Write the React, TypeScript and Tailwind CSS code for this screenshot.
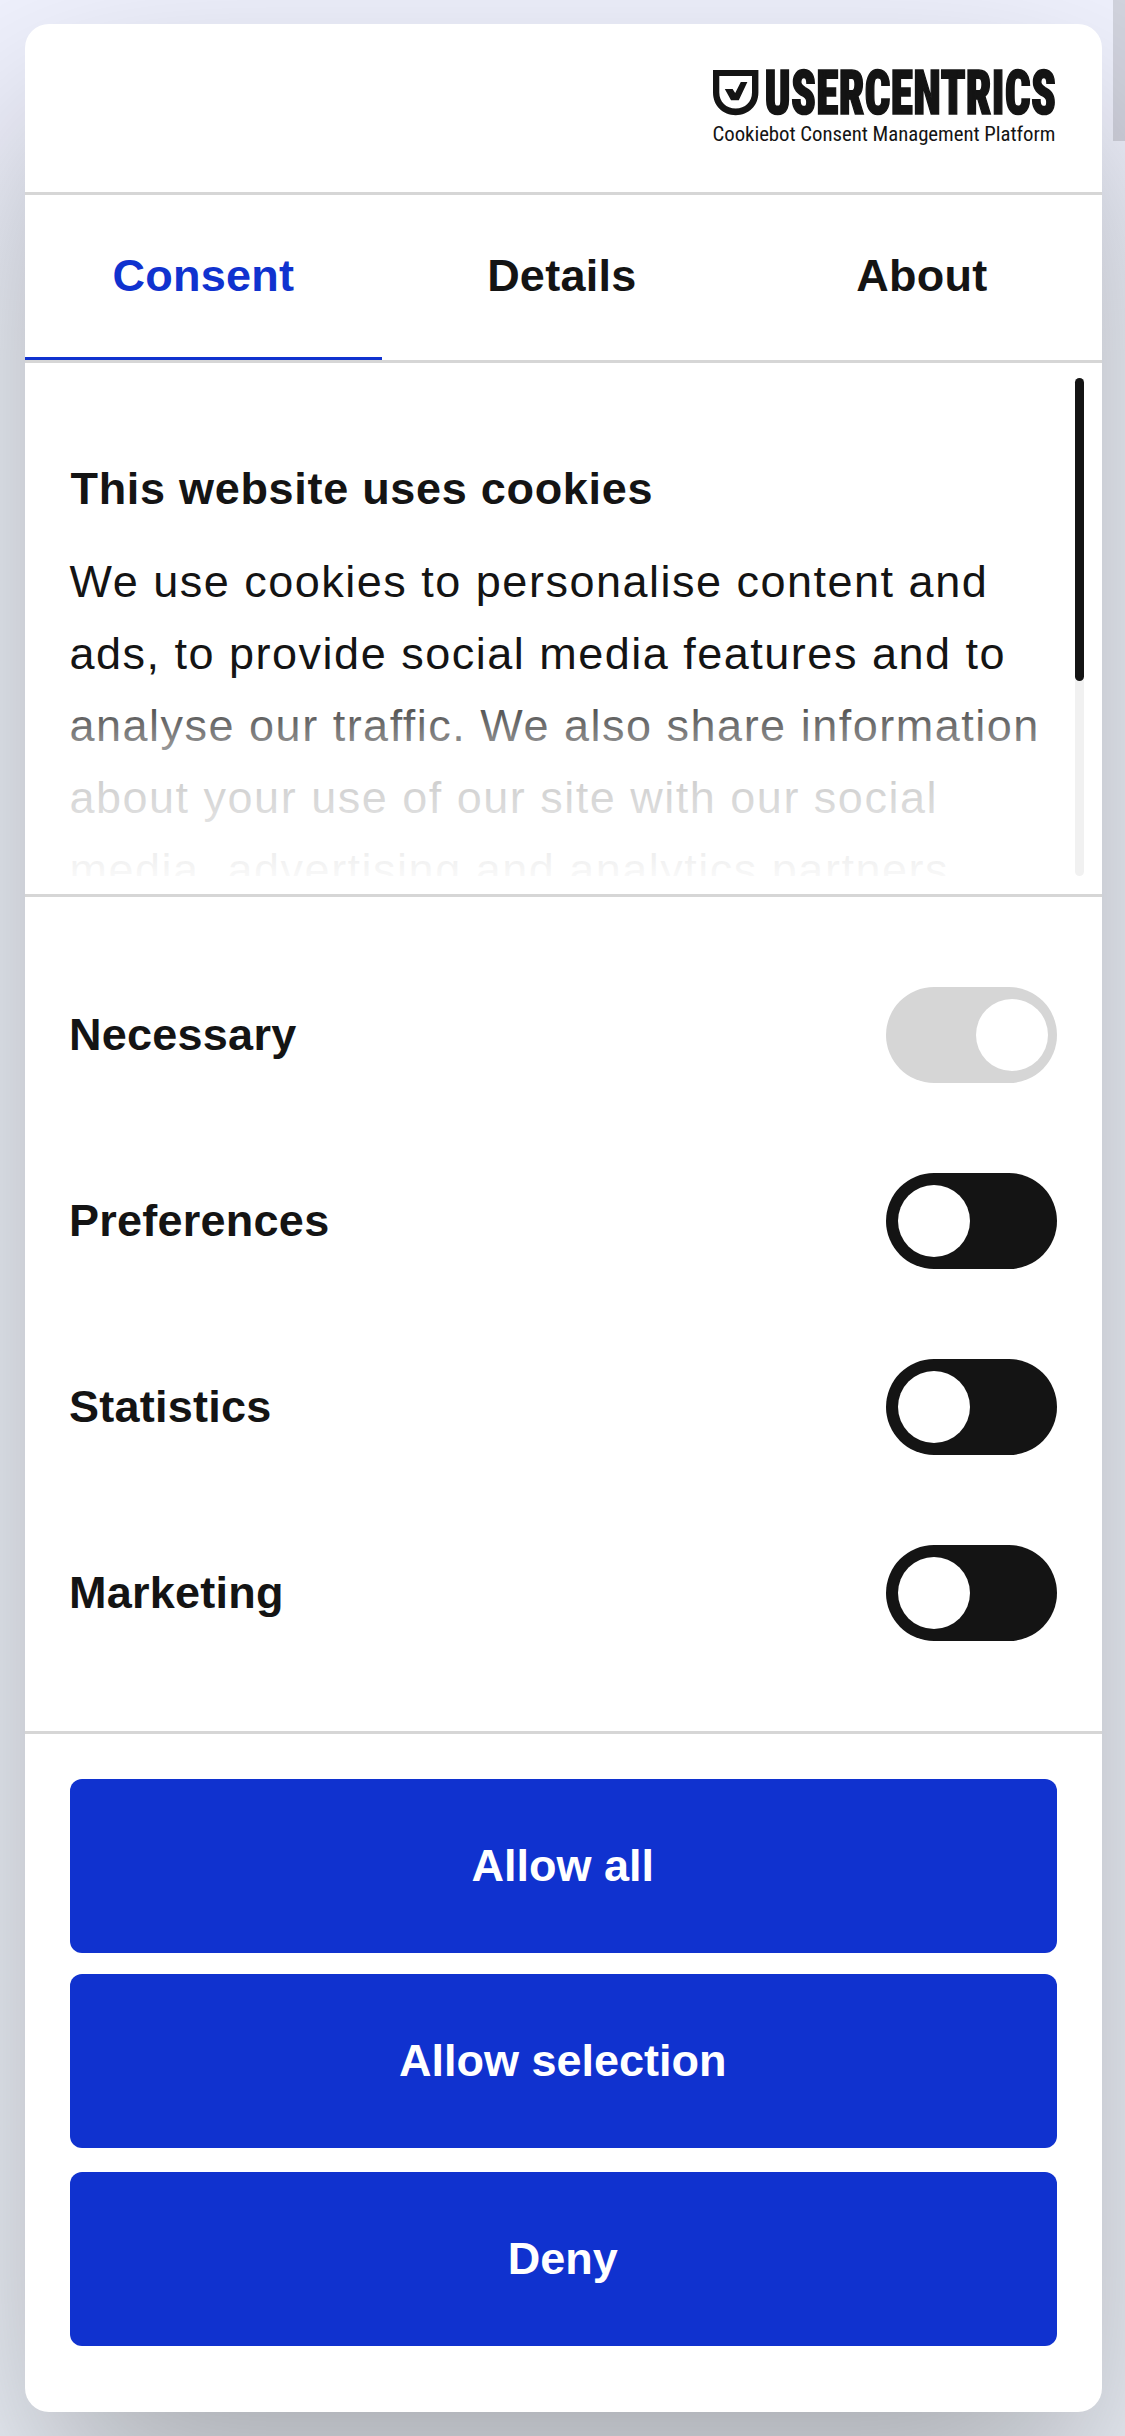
import { useState } from 'react';

interface Category {
  id: string;
  label: string;
  locked?: boolean;
}

const tabs = ['Consent', 'Details', 'About'];

const categories: Category[] = [
  { id: 'necessary', label: 'Necessary', locked: true },
  { id: 'preferences', label: 'Preferences' },
  { id: 'statistics', label: 'Statistics' },
  { id: 'marketing', label: 'Marketing' },
];

function Logo() {
  return (
    <svg
      width="343"
      height="80"
      viewBox="0 0 343 80"
      fill="#141414"
      fontFamily="'Roboto Condensed', Roboto, sans-serif"
      className="overflow-visible"
      role="img"
      aria-label="Usercentrics"
    >
      {/* Shield */}
      <path fillRule="evenodd" d="M0 0H45.4V22.5C45.4 35.8 35.5 45.2 22.7 45.2S0 35.8 0 22.5ZM6.3 6V22.5C6.3 32 13.3 38.5 22.7 38.5S39 32 39 22.5V6Z" />
      <path d="M11.8 19H19.6L22.2 22.9L27.8 12H34.4L25.8 30.3H18Z" />
      <text
        transform="translate(51.6 43.9) scale(0.75 1)"
        fontWeight="900"
        fontSize="60.5"
        textLength="388.5"
        stroke="#141414"
        strokeWidth="1.6"
      >
        USERCENTRICS
      </text>
      <text x="-0.5" y="71" fontSize="20.8" textLength="343">
        Cookiebot Consent Management Platform
      </text>
    </svg>
  );
}

interface ToggleProps {
  checked: boolean;
  locked?: boolean;
  onChange: () => void;
}

function Toggle({ checked, locked, onChange }: ToggleProps) {
  return (
    <button
      type="button"
      role="switch"
      aria-checked={checked}
      disabled={locked}
      onClick={onChange}
      className={`flex h-24 w-[171px] items-center rounded-full ${locked ? 'bg-[#d6d6d6]' : 'bg-[#141414]'} ${checked ? 'justify-end pr-[9px]' : 'justify-start pl-3'}`}
    >
      <span className="size-[72px] rounded-full bg-white" />
    </button>
  );
}

export default function App() {
  const [activeTab, setActiveTab] = useState('Consent');
  const [enabled, setEnabled] = useState<string[]>(['necessary']);

  const toggle = (id: string) =>
    setEnabled(prev => (prev.includes(id) ? prev.filter(item => item !== id) : [...prev, id]));

  return (
    <div className="relative h-[2436px] w-[1125px] overflow-hidden bg-linear-to-b from-[#f0f2fe] from-5% to-[#f1f5fd] to-15% pl-[25.3px] pt-6 font-['Liberation_Sans',Arial,sans-serif] text-[45px] text-[#141414]">
      {/* Page scrollbar */}
      <div className="absolute right-0 top-0 z-10 h-[141px] w-3 bg-black/12" />

      <div className="flex h-[2388px] w-[1077px] flex-col overflow-hidden rounded-3xl bg-white shadow-[0_96px_204px_rgba(0,0,0,0.3)]">
        <header className="flex h-[171px] shrink-0 justify-end border-b-3 border-[#d6d6d6] pr-[46.5px] pt-[46px]">
          <Logo />
        </header>

        <nav className="grid h-[168px] shrink-0 grid-cols-[357px_1fr_1fr] border-b-3 border-[#d6d6d6]">
          {tabs.map(tab => (
            <button
              key={tab}
              onClick={() => setActiveTab(tab)}
              className={`border-b-3 pr-px font-bold tracking-[0.25px] ${activeTab === tab ? 'border-[#1032cf] text-[#1032cf]' : 'border-transparent'}`}
            >
              {tab}
            </button>
          ))}
        </nav>

        <section className="flex h-[534px] shrink-0 justify-between border-b-3 border-[#d6d6d6] pb-[18px] pl-[44.2px] pr-[18px] pt-[15px]">
          <div className="relative h-[498px] w-[975px] overflow-hidden pt-[75px]">
            <h2 className="mb-[21px] pl-px font-bold leading-[72px] tracking-[0.7px]">This website uses cookies</h2>
            <p className="leading-[72px] tracking-[1.5px]">
              We use cookies to personalise content and ads, to provide social media features and to analyse our
              traffic. We also share information about your use of our site with our social media, advertising and
              analytics partners
            </p>
            <div className="pointer-events-none absolute inset-x-0 -bottom-[15px] h-[219px] bg-[linear-gradient(180deg,rgba(255,255,255,0),rgba(255,255,255,0.8)_50%,#fff)]" />
          </div>
          <div className="h-[498px] w-[9px] rounded-full bg-[#f1f1f1]">
            <div className="h-[303px] rounded-full bg-[#141414]" />
          </div>
        </section>

        <section className="flex h-[837px] shrink-0 flex-col gap-[90px] border-b-3 border-[#d6d6d6] pl-[43.7px] pr-[45px] pt-[90px]">
          {categories.map(category => (
            <div key={category.id} className="flex h-24 items-center justify-between">
              <span className="font-bold tracking-[0.25px]">{category.label}</span>
              <Toggle
                checked={enabled.includes(category.id)}
                locked={category.locked}
                onChange={() => toggle(category.id)}
              />
            </div>
          ))}
        </section>

        <footer className="flex flex-col px-[45px] pt-[45px] font-bold text-white">
          <button className="mb-[21px] h-[174px] rounded-xl bg-[#1032cf] pr-[2px]">Allow all</button>
          <button className="mb-6 h-[174px] rounded-xl bg-[#1032cf] pr-[2px]">Allow selection</button>
          <button className="h-[174px] rounded-xl bg-[#1032cf] pr-[2px]">Deny</button>
        </footer>
      </div>
    </div>
  );
}
